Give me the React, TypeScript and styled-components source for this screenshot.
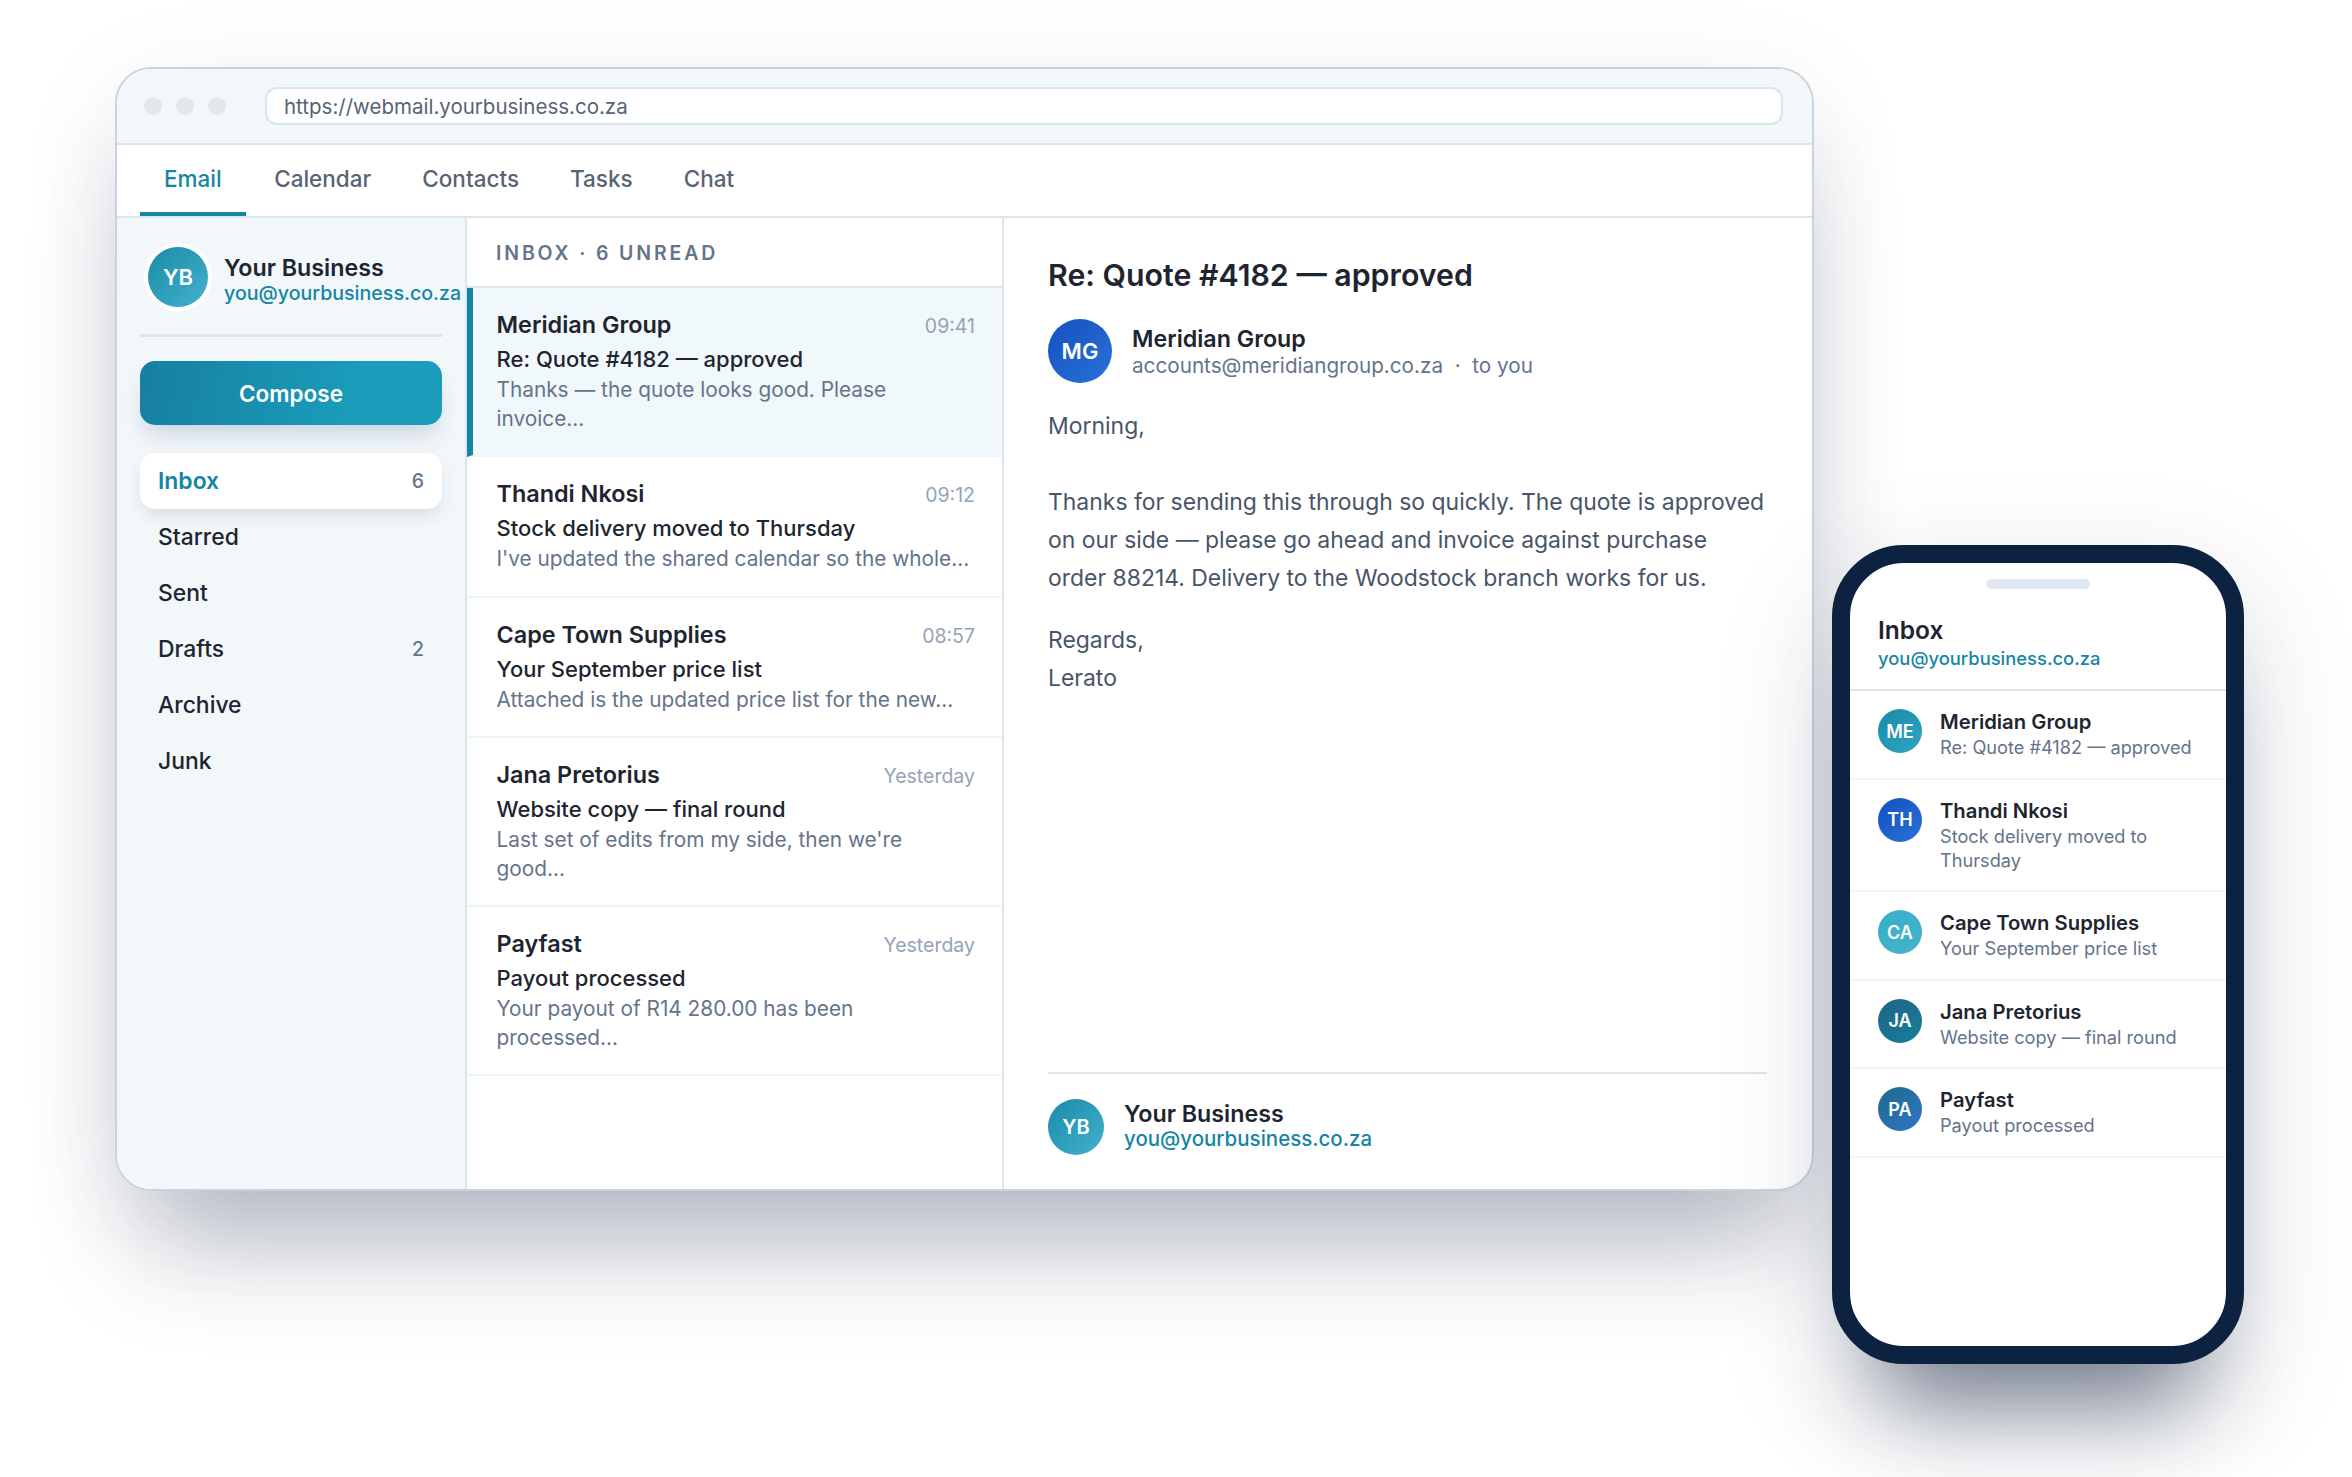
import styled, { createGlobalStyle } from "styled-components";

type Mail = {
  name: string;
  time: string;
  subject: string;
  preview: string;
  active?: boolean;
};

type PhoneMail = {
  initials: string;
  name: string;
  subject: string;
  tone: string;
};

const teal = "#1585a5";
const ink = "#1e2530";
const slate = "#64748b";
const line = "#dbe5ee";
const soft = "#f2f7fa";
const tealGradient = "linear-gradient(135deg, #1a8aa8, #42b2cd)";

const mails: Mail[] = [
  { name: "Meridian Group", time: "09:41", subject: "Re: Quote #4182 — approved", preview: "Thanks — the quote looks good. Please invoice...", active: true },
  { name: "Thandi Nkosi", time: "09:12", subject: "Stock delivery moved to Thursday", preview: "I've updated the shared calendar so the whole..." },
  { name: "Cape Town Supplies", time: "08:57", subject: "Your September price list", preview: "Attached is the updated price list for the new..." },
  { name: "Jana Pretorius", time: "Yesterday", subject: "Website copy — final round", preview: "Last set of edits from my side, then we're good..." },
  { name: "Payfast", time: "Yesterday", subject: "Payout processed", preview: "Your payout of R14 280.00 has been processed..." },
];

const folders = [
  { label: "Inbox", count: "6", active: true },
  { label: "Starred" },
  { label: "Sent" },
  { label: "Drafts", count: "2" },
  { label: "Archive" },
  { label: "Junk" },
];

const tabs = ["Email", "Calendar", "Contacts", "Tasks", "Chat"];

const phoneMails: PhoneMail[] = [
  { initials: "ME", name: "Meridian Group", subject: "Re: Quote #4182 — approved", tone: "linear-gradient(135deg, #1a8aa8, #2ea6c2)" },
  { initials: "TH", name: "Thandi Nkosi", subject: "Stock delivery moved to Thursday", tone: "linear-gradient(135deg, #1450bf, #2a72d8)" },
  { initials: "CA", name: "Cape Town Supplies", subject: "Your September price list", tone: "linear-gradient(135deg, #38afc9, #45b3cd)" },
  { initials: "JA", name: "Jana Pretorius", subject: "Website copy — final round", tone: "linear-gradient(135deg, #1f6484, #167f9c)" },
  { initials: "PA", name: "Payfast", subject: "Payout processed", tone: "linear-gradient(135deg, #1f6a8a, #2f75c8)" },
];

const GlobalStyle = createGlobalStyle`
  html, body {
    margin: 0;
    background: #fff;
  }
  body {
    font-family: Inter, "Liberation Sans", sans-serif;
    color: ${ink};
  }
  * {
    box-sizing: border-box;
  }
`;

const Stage = styled.div`
  display: flex;
  align-items: flex-start;
  width: 2352px;
  height: 1477px;
  padding: 67px 0 0 115px;
  overflow: hidden;
`;

const WindowFrame = styled.div`
  flex: none;
  border-radius: 36px;
  box-shadow: 0 80px 110px -30px rgba(20, 35, 65, 0.3), 0 20px 110px rgba(20, 35, 65, 0.07);
`;

const BrowserWindow = styled.div`
  display: flex;
  flex-direction: column;
  width: 1699px;
  height: 1124px;
  border: 2px solid #c8d3de;
  border-radius: 36px;
  background: #fff;
  overflow: hidden;
`;

const AddressBar = styled.div`
  display: flex;
  align-items: center;
  flex: none;
  height: 76px;
  padding: 0 29px 0 27px;
  background: ${soft};
  border-bottom: 2px solid ${line};
`;

const Dot = styled.span`
  flex: none;
  width: 18px;
  height: 18px;
  margin-right: 14px;
  border-radius: 50%;
  background: #e3e7ec;
`;

const UrlField = styled.div`
  flex: 1;
  height: 38px;
  margin-left: 25px;
  padding-left: 17px;
  border: 2px solid ${line};
  border-radius: 12px;
  background: #fff;
  font-size: 20.5px;
  line-height: 35px;
  color: #566476;
`;

const TabBar = styled.nav`
  display: flex;
  flex: none;
  height: 73px;
  padding-left: 23px;
  border-bottom: 2px solid ${line};
`;

const Tab = styled.div<{ $active?: boolean }>`
  height: 71px;
  padding: 0 24px;
  margin-right: 3px;
  font-size: 22.5px;
  font-weight: 500;
  line-height: 68px;
  color: ${(p) => (p.$active ? teal : "#566476")};
  border-bottom: 4px solid ${(p) => (p.$active ? teal : "transparent")};
  &:first-child {
    margin-right: 4.5px;
  }
`;

const Panes = styled.div`
  display: flex;
  flex: 1;
  min-height: 0;
`;

const Sidebar = styled.aside`
  flex: none;
  width: 350px;
  padding: 29px 23px 0;
  background: ${soft};
  border-right: 2px solid ${line};
`;

const AccountBlock = styled.div`
  padding-bottom: 27px;
  margin-bottom: 24px;
  border-bottom: 3px solid ${line};
`;

const AccountRow = styled.div`
  display: flex;
  align-items: center;
  gap: 16px;
  height: 60px;
  white-space: nowrap;
`;

const Avatar = styled.div<{ $size: number; $tone: string; $font: number }>`
  display: flex;
  align-items: center;
  justify-content: center;
  flex: none;
  width: ${(p) => p.$size}px;
  height: ${(p) => p.$size}px;
  border-radius: 50%;
  background: ${(p) => p.$tone};
  color: #fff;
  font-size: ${(p) => p.$font}px;
  font-weight: 600;
`;

const RingAvatar = styled(Avatar)`
  margin-left: 8px;
  box-shadow: 0 0 0 4px #fff;
`;

const AccountText = styled.div<{ $offset?: number }>`
  display: flex;
  flex-direction: column;
  padding-top: ${(p) => p.$offset ?? 0}px;
`;

const BoldName = styled.div`
  font-size: 23.25px;
  font-weight: 600;
  line-height: 25px;
  color: ${ink};
`;

const AccentMail = styled.div<{ $size: number }>`
  font-size: ${(p) => p.$size}px;
  font-weight: 500;
  line-height: 26px;
  color: ${teal};
`;

const ComposeButton = styled.div`
  display: flex;
  align-items: center;
  justify-content: center;
  height: 64px;
  margin-bottom: 28px;
  border-radius: 15px;
  background: linear-gradient(100deg, #177fa0, #1a9cba 70%);
  box-shadow: 0 14px 24px -6px rgba(25, 60, 100, 0.2);
  color: #fff;
  font-size: 22.5px;
  font-weight: 600;
`;

const FolderList = styled.div`
  display: flex;
  flex-direction: column;
`;

const Folder = styled.div<{ $active?: boolean }>`
  display: flex;
  align-items: center;
  justify-content: space-between;
  height: 56px;
  padding: 0 18px;
  border-radius: 15px;
  font-size: 22.9px;
  font-weight: ${(p) => (p.$active ? 600 : 450)};
  color: ${(p) => (p.$active ? teal : ink)};
  background: ${(p) => (p.$active ? "#fff" : "transparent")};
  box-shadow: ${(p) => (p.$active ? "0 8px 18px -4px rgba(25, 60, 100, 0.16)" : "none")};
`;

const FolderCount = styled.span`
  font-size: 19.5px;
  font-weight: 500;
  color: ${slate};
`;

const MailList = styled.section`
  flex: none;
  width: 537px;
  border-right: 2px solid ${line};
`;

const ListHeader = styled.div`
  height: 70px;
  padding: 0 29px;
  font-size: 19.5px;
  font-weight: 600;
  line-height: 70px;
  letter-spacing: 2.85px;
  color: ${slate};
  border-bottom: 2px solid ${line};
`;

const MailRow = styled.article<{ $active?: boolean }>`
  padding: 21px 27px 22px ${(p) => (p.$active ? 23.5 : 29.5)}px;
  background: ${(p) => (p.$active ? "#f1f8fb" : "#fff")};
  border-left: ${(p) => (p.$active ? `6px solid ${teal}` : "none")};
  border-bottom: 2px solid #f0f5f9;
`;

const MailTop = styled.div`
  display: flex;
  align-items: baseline;
  justify-content: space-between;
`;

const MailName = styled.div`
  font-size: 23.4px;
  font-weight: 600;
  line-height: 32px;
  color: ${ink};
`;

const MailTime = styled.div`
  font-size: 19.5px;
  color: #94a3b8;
`;

const MailSubject = styled.div`
  margin-top: 3px;
  font-size: 22px;
  font-weight: 500;
  line-height: 31px;
  color: ${ink};
`;

const MailPreview = styled.div`
  margin-top: 1px;
  font-size: 20.8px;
  line-height: 28.5px;
  color: ${slate};
`;

const Reader = styled.section`
  display: flex;
  flex-direction: column;
  flex: 1;
  padding: 36px 45px 0 44px;
`;

const ReaderTitle = styled.h1`
  margin: 0 0 23px;
  font-size: 30.3px;
  font-weight: 600;
  line-height: 42px;
  color: ${ink};
`;

const SenderRow = styled.div`
  display: flex;
  align-items: center;
  gap: 20px;
  margin-bottom: 23.5px;
`;

const SenderText = styled.div`
  display: flex;
  flex-direction: column;
  padding-top: 4px;
`;

const SenderMeta = styled.div`
  margin-top: 1px;
  font-size: 20.7px;
  line-height: 28px;
  color: ${slate};
`;

const Body = styled.div`
  flex: 1;
  font-size: 22.95px;
  line-height: 38px;
  color: #475569;
`;

const Paragraph = styled.p<{ $gap: number }>`
  margin: 0 0 ${(p) => p.$gap}px;
`;

const Signature = styled.div`
  display: flex;
  align-items: center;
  gap: 20px;
  height: 117px;
  padding-bottom: 10px;
  border-top: 2px solid ${line};
`;

const Phone = styled.div`
  display: flex;
  flex-direction: column;
  flex: none;
  width: 412px;
  height: 819px;
  margin: 478px 0 0 18px;
  border: 18px solid #0d2240;
  border-radius: 72px;
  background: #fff;
  box-shadow: 0 90px 90px -50px rgba(15, 30, 60, 0.5), 0 40px 120px rgba(15, 30, 60, 0.16);
  overflow: hidden;
`;

const PhoneSpeaker = styled.div`
  flex: none;
  width: 104px;
  height: 10px;
  margin: 16px auto 0;
  border-radius: 5px;
  background: #dfe7f0;
`;

const PhoneHeader = styled.div`
  flex: none;
  height: 102px;
  padding: 26px 28px 0;
  border-bottom: 2px solid ${line};
`;

const PhoneTitle = styled.div`
  font-size: 24.5px;
  font-weight: 600;
  line-height: 30px;
  color: ${ink};
`;

const PhoneRow = styled.div`
  display: flex;
  align-items: flex-start;
  gap: 18px;
  padding: 18px 28px 18.6px;
  border-bottom: 2px solid #f0f5f9;
`;

const PhoneName = styled.div`
  font-size: 20.25px;
  font-weight: 600;
  line-height: 26px;
  color: ${ink};
`;

const PhoneSubject = styled.div`
  font-size: 18.2px;
  line-height: 24px;
  color: ${slate};
`;

export default function App() {
  return (
    <Stage>
      <GlobalStyle />
      <WindowFrame>
        <BrowserWindow>
          <AddressBar>
            <Dot />
            <Dot />
            <Dot />
            <UrlField>https://webmail.yourbusiness.co.za</UrlField>
          </AddressBar>
          <TabBar>
            {tabs.map((tab) => (
              <Tab key={tab} $active={tab === "Email"}>{tab}</Tab>
            ))}
          </TabBar>
          <Panes>
            <Sidebar>
              <AccountBlock>
                <AccountRow>
                  <RingAvatar $size={60} $tone={tealGradient} $font={22}>YB</RingAvatar>
                  <AccountText $offset={6}>
                    <BoldName>Your Business</BoldName>
                    <AccentMail $size={19.6}>you@yourbusiness.co.za</AccentMail>
                  </AccountText>
                </AccountRow>
              </AccountBlock>
              <ComposeButton>Compose</ComposeButton>
              <FolderList>
                {folders.map((folder) => (
                  <Folder key={folder.label} $active={folder.active}>
                    {folder.label}
                    {folder.count && <FolderCount>{folder.count}</FolderCount>}
                  </Folder>
                ))}
              </FolderList>
            </Sidebar>
            <MailList>
              <ListHeader>INBOX · 6 UNREAD</ListHeader>
              {mails.map((mail) => (
                <MailRow key={mail.name} $active={mail.active}>
                  <MailTop>
                    <MailName>{mail.name}</MailName>
                    <MailTime>{mail.time}</MailTime>
                  </MailTop>
                  <MailSubject>{mail.subject}</MailSubject>
                  <MailPreview>{mail.preview}</MailPreview>
                </MailRow>
              ))}
            </MailList>
            <Reader>
              <ReaderTitle>Re: Quote #4182 — approved</ReaderTitle>
              <SenderRow>
                <Avatar $size={64} $tone="linear-gradient(135deg, #1450bf, #2a72d8)" $font={22}>MG</Avatar>
                <SenderText>
                  <BoldName>Meridian Group</BoldName>
                  <SenderMeta>accounts@meridiangroup.co.za &nbsp;·&nbsp; to you</SenderMeta>
                </SenderText>
              </SenderRow>
              <Body>
                <Paragraph $gap={38}>Morning,</Paragraph>
                <Paragraph $gap={24}>
                  Thanks for sending this through so quickly. The quote is approved on our side — please go ahead and invoice against purchase order 88214. Delivery to the Woodstock branch works for us.
                </Paragraph>
                <Paragraph $gap={0}>
                  Regards,
                  <br />
                  Lerato
                </Paragraph>
              </Body>
              <Signature>
                <Avatar $size={56} $tone={tealGradient} $font={20}>YB</Avatar>
                <AccountText>
                  <BoldName>Your Business</BoldName>
                  <AccentMail $size={20.5}>you@yourbusiness.co.za</AccentMail>
                </AccountText>
              </Signature>
            </Reader>
          </Panes>
        </BrowserWindow>
      </WindowFrame>
      <Phone>
        <PhoneSpeaker />
        <PhoneHeader>
          <PhoneTitle>Inbox</PhoneTitle>
          <AccentMail $size={18.4}>you@yourbusiness.co.za</AccentMail>
        </PhoneHeader>
        {phoneMails.map((mail) => (
          <PhoneRow key={mail.initials}>
            <Avatar $size={44} $tone={mail.tone} $font={18}>{mail.initials}</Avatar>
            <div>
              <PhoneName>{mail.name}</PhoneName>
              <PhoneSubject>{mail.subject}</PhoneSubject>
            </div>
          </PhoneRow>
        ))}
      </Phone>
    </Stage>
  );
}
